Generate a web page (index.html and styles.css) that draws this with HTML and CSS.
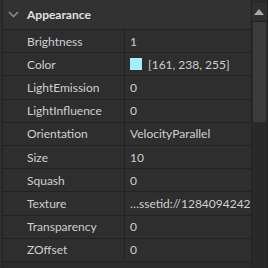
FILE: index.html
```html
<!DOCTYPE html>
<html>
  <head>
    <title>Properties</title>
    <link rel="stylesheet" href="styles.css">
  </head>
  <body>
    <div class="panel">
      <div class="list">
        <div class="header">
          <svg class="chevron" width="11" height="7" viewBox="0 0 11 7">
            <path d="M1 1 L5.5 5.5 L10 1" fill="none" stroke="#8a8a8a" stroke-width="1.6" />
          </svg>
          <span>Appearance</span>
        </div>
        <div class="row"><div class="name">Brightness</div><div class="value">1</div></div>
        <div class="row">
          <div class="name">Color</div>
          <div class="value"><span class="swatch"></span>[161, 238, 255]</div>
        </div>
        <div class="row"><div class="name">LightEmission</div><div class="value">0</div></div>
        <div class="row"><div class="name">LightInfluence</div><div class="value">0</div></div>
        <div class="row"><div class="name">Orientation</div><div class="value">VelocityParallel</div></div>
        <div class="row"><div class="name">Size</div><div class="value">10</div></div>
        <div class="row"><div class="name">Squash</div><div class="value">0</div></div>
        <div class="row"><div class="name">Texture</div><div class="value">…ssetid://1284094242</div></div>
        <div class="row"><div class="name">Transparency</div><div class="value">0</div></div>
        <div class="row"><div class="name">ZOffset</div><div class="value">0</div></div>
        <div class="empty"></div>
      </div>
      <div class="scrollbar">
        <div class="up">
          <svg width="10" height="6" viewBox="0 0 10 6">
            <path d="M5 0 L10 6 L0 6 Z" fill="#a8a8a8" />
          </svg>
        </div>
        <div class="thumb"></div>
        <div class="track"></div>
      </div>
    </div>
  </body>
</html>
```

FILE: styles.css
```css
body {
  margin: 0;
  background-color: #2e2e2e;
  font-family: Lato, "Liberation Sans", sans-serif;
  font-size: 12px;
  color: #d0d0d0;
}
.panel {
  display: flex;
  width: 268px;
  height: 268px;
  overflow: hidden;
}
.list {
  display: flex;
  flex-direction: column;
  width: 248px;
  margin-left: 2px;
  border-left: 1px solid #222222;
  border-right: 1px solid #222222;
}
.header {
  display: flex;
  align-items: center;
  height: 30px;
  box-sizing: border-box;
  border-bottom: 1px solid #222222;
  background-color: #323232;
  font-weight: bold;
  color: #e0e0e0;
  padding-bottom: 1px;
}
.chevron {
  margin-left: 5px;
  margin-right: 8px;
}
.row {
  display: flex;
  height: 23.2px;
  box-sizing: border-box;
  border-bottom: 1px solid #222222;
}
.name {
  width: 122px;
  padding-left: 24px;
  box-sizing: border-box;
  border-right: 1px solid #222222;
  display: flex;
  align-items: center;
}
.value {
  flex: 1;
  padding-left: 5px;
  display: flex;
  align-items: center;
  white-space: nowrap;
}
.swatch {
  width: 12px;
  height: 12px;
  background-color: rgb(161, 238, 255);
  margin-right: 6px;
}
.empty {
  flex: 1;
  background-color: #2b2b2b;
}
.scrollbar {
  display: flex;
  flex-direction: column;
  width: 17px;
  background-color: #292929;
  border-right: 1px solid #222222;
  box-sizing: border-box;
}
.up {
  height: 18px;
  margin-top: 3px;
  display: flex;
  align-items: center;
  justify-content: center;
  border-bottom: 1px solid #222222;
  background-color: #303030;
}
.thumb {
  height: 100px;
  margin: 0 1px;
  background-color: #3b3b3b;
}
.track {
  flex: 1;
}
```
